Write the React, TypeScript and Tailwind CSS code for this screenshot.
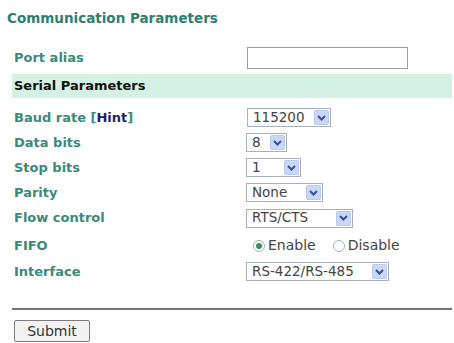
import React from "react";

const font = { fontFamily: '"DejaVu Sans", Verdana, sans-serif' };

function Arrow() {
  return (
    <span className="ml-auto mr-[1px] flex h-[15px] w-[15px] items-center justify-center rounded-[2px] border border-[#b9c9ef] bg-[#c8d8fb]">
      <svg width="9" height="6" viewBox="0 0 9 6">
        <polyline points="1,1 4.5,4.5 8,1" fill="none" stroke="#3c4f86" strokeWidth="2" />
      </svg>
    </span>
  );
}

function Select({ value, width }: { value: string; width: string }) {
  return (
    <div className={`flex h-[19px] items-center border border-[#a9b0ba] bg-white pl-[5px] text-[13.5px] leading-none text-[#444] ${width}`}>
      <span>{value}</span>
      <Arrow />
    </div>
  );
}

function Radio({ checked }: { checked?: boolean }) {
  return (
    <span className="flex h-[12px] w-[12px] items-center justify-center rounded-full border border-[#a8b0b0] bg-white">
      {checked && <span className="h-[6px] w-[6px] rounded-full bg-[#3f8c64]" />}
    </span>
  );
}

function Row({ label, children, h = "h-[25px]" }: { label: React.ReactNode; children: React.ReactNode; h?: string }) {
  return (
    <div className={`flex items-center ${h}`}>
      <div className="w-[234px] pl-[2px] text-[13px] font-bold text-[#3a8a79]">{label}</div>
      <div className="flex items-center">{children}</div>
    </div>
  );
}

export default function App() {
  return (
    <div className="h-[343px] w-[454px] overflow-hidden bg-white" style={font}>
      <div className="pl-[7px] pt-[10px] text-[13.5px] font-bold leading-[16px] text-[#2f7e6e]">
        Communication Parameters
      </div>
      <div className="pl-[12px] pr-[2px]">
        <div className="mt-[19px]">
          <Row label="Port alias">
            <div className="ml-[1px] h-[22px] w-[161px] border border-[#9c9c9c] bg-white" />
          </Row>
        </div>
        <div className="mt-[4px] flex h-[24px] items-center bg-[#d3f2e3] pl-[2px] text-[13px] font-bold text-[#111]">
          Serial Parameters
        </div>
        <div className="mt-[7px]">
          <Row
            label={
              <span>
                Baud rate [<span className="text-[#1d1f6e]">Hint</span>]
              </span>
            }
          >
            <Select value="115200" width="w-[84px] ml-[1px]" />
          </Row>
          <Row label="Data bits">
            <Select value="8" width="w-[41px]" />
          </Row>
          <Row label="Stop bits">
            <Select value="1" width="w-[55px]" />
          </Row>
          <Row label="Parity">
            <Select value="None" width="w-[77px]" />
          </Row>
          <Row label="Flow control" h="h-[26px]">
            <Select value="RTS/CTS" width="w-[107px]" />
          </Row>
          <Row label="FIFO" h="h-[29px]">
            <div className="ml-[7px] flex items-center gap-[3px] text-[14px] text-[#444]">
              <Radio checked />
              <span>Enable</span>
              <span className="ml-[11px]" />
              <Radio />
              <span>Disable</span>
            </div>
          </Row>
          <Row label="Interface" h="h-[23px]">
            <Select value="RS-422/RS-485" width="w-[143px]" />
          </Row>
        </div>
        <div className="mt-[25px] h-[2px] bg-[#747474]" />
        <button className="ml-[2px] mt-[10px] flex h-[22px] w-[76px] items-center justify-center rounded-[2px] border border-[#7d7d7d] bg-[#f3f3f3] text-[14px] text-[#333]">
          Submit
        </button>
      </div>
    </div>
  );
}
